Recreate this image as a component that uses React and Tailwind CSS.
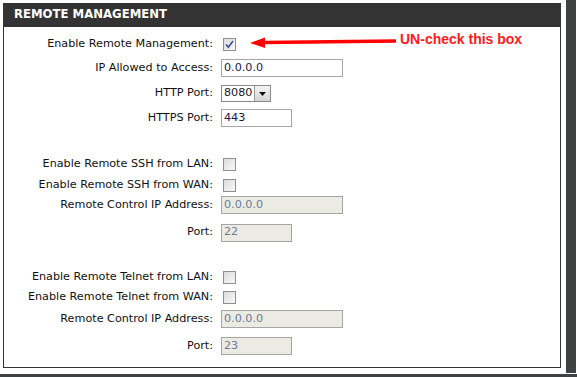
import React from "react";

const font = { fontFamily: '"DejaVu Sans", Verdana, sans-serif' };

const Check = ({ checked }) => (
    <div className="ml-[2px] w-[13px] h-[13px] border border-[#8f8f8f] bg-gradient-to-br from-[#dcdcdc] to-[#f8f8f8] flex items-center justify-center">
        {checked && (
            <svg width="9" height="9" viewBox="0 0 9 9">
                <path d="M1 4.5 L3.3 7.2 L8 1" fill="none" stroke="#3c4f9a" strokeWidth="1.6" />
            </svg>
        )}
    </div>
);

const Field = ({ value, w, disabled }) => (
    <div
        className={`h-[18px] border border-[#a5a5a5] flex items-center pl-[2px] text-[11.2px] ${disabled ? "bg-[#ebebe4] text-[#6d7c94]" : "bg-white text-[#1a1a4a]"}`}
        style={{ width: w }}
    >
        {value}
    </div>
);

const Select = () => (
    <div className="h-[17px] w-[50px] border border-[#8a8a8a] flex items-center bg-white">
        <span className="flex-1 pl-[2px] text-[11.2px] text-[#1a1a2a]">8080</span>
        <div className="w-[16px] h-[15px] bg-gradient-to-b from-[#f4f4f4] to-[#d4d4d4] border-l border-[#9a9a9a] flex items-center justify-center">
            <svg width="7" height="4" viewBox="0 0 7 4"><path d="M0 0 H7 L3.5 4 Z" fill="#111" /></svg>
        </div>
    </div>
);

const rows = [
    { label: "Enable Remote Management:", h: 23, c: <Check checked /> },
    { label: "IP Allowed to Access:", h: 24, c: <Field value="0.0.0.0" w={122} /> },
    { label: "HTTP Port:", h: 27, c: <Select /> },
    { label: "HTTPS Port:", h: 22, c: <Field value="443" w={71} /> },
    { gap: 25 },
    { label: "Enable Remote SSH from LAN:", h: 21, c: <Check /> },
    { label: "Enable Remote SSH from WAN:", h: 21, c: <Check /> },
    { label: "Remote Control IP Address:", h: 18, c: <Field value="0.0.0.0" w={122} disabled /> },
    { label: "Port:", h: 37, c: <Field value="22" w={71} disabled /> },
    { gap: 15 },
    { label: "Enable Remote Telnet from LAN:", h: 22, c: <Check /> },
    { label: "Enable Remote Telnet from WAN:", h: 19, c: <Check /> },
    { label: "Remote Control IP Address:", h: 24, c: <Field value="0.0.0.0" w={122} disabled /> },
    { label: "Port:", h: 30, c: <Field value="23" w={71} disabled /> },
];

export default function App() {
    return (
        <div className="w-[577px] h-[377px] bg-white relative overflow-hidden" style={font}>
            <div className="flex h-[374px]">
                <div className="pl-[3px] pt-[3px]">
                    <div className="w-[558px] h-[365px] border-l border-r border-b border-[#333]">
                        <div className="h-[24px] bg-[#333333] -mr-[1px] -ml-[1px] flex items-center pl-[11px] text-white font-bold text-[11.7px]">
                            REMOTE MANAGEMENT
                        </div>
                        <div className="pt-[6px]">
                            {rows.map((r, i) =>
                                r.gap ? (
                                    <div key={i} style={{ height: r.gap }} />
                                ) : (
                                    <div key={i} className="flex items-center" style={{ height: r.h }}>
                                        <div className="w-[209px] text-right text-[11.2px] text-[#111]">{r.label}</div>
                                        <div className="ml-[8px]">{r.c}</div>
                                    </div>
                                )
                            )}
                        </div>
                    </div>
                </div>
                <div className="ml-[5px] w-[10px] h-[373px] bg-[#3e4243]" />
            </div>
            <div className="h-[3px] bg-[#3e4243]" />
            <div className="absolute left-[250px] top-[36px] w-[146px] h-[12px]">
                <svg width="146" height="12" viewBox="0 0 146 12">
                    <path d="M14 4.8 L146 3.2 L146 6.8 L14 8.2 Z" fill="#ff0000" />
                    <path d="M0 7 L15 1.5 L15 12 Z" fill="#ff0000" />
                </svg>
            </div>
            <div
                className="absolute left-[400px] top-[29px] text-[14px] font-bold text-[#ff1a1a]"
                style={{ fontFamily: '"Liberation Sans", Arial, sans-serif' }}
            >
                UN-check this box
            </div>
        </div>
    );
}
